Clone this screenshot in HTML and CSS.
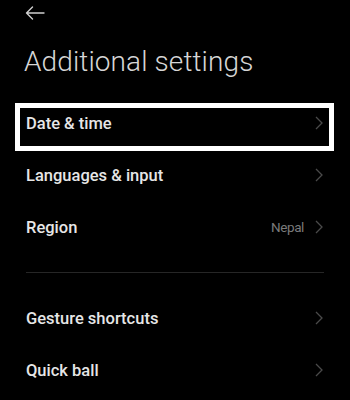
FILE: index.html
```html
<!DOCTYPE html>
<html>
<head>
<meta charset="utf-8">
<link rel="stylesheet" href="styles.css">
</head>
<body>
<div class="screen">
  <div class="topbar">
    <svg class="back" width="20" height="14" viewBox="0 0 20 14">
      <path d="M19 7H1.5M7.5 1L1.5 7L7.5 13" fill="none" stroke="#d0d0d0" stroke-width="1.4" stroke-linecap="round" stroke-linejoin="round"/>
    </svg>
  </div>
  <h1 class="title">Additional settings</h1>
  <div class="list">
    <div class="row highlighted">
      <span class="label">Date &amp; time</span>
      <span class="right"><svg class="chev" width="8" height="14" viewBox="0 0 8 14"><path d="M1 1L7 7L1 13" fill="none" stroke="#4a4a4a" stroke-width="1.3"/></svg></span>
    </div>
    <div class="row">
      <span class="label">Languages &amp; input</span>
      <span class="right"><svg class="chev" width="8" height="14" viewBox="0 0 8 14"><path d="M1 1L7 7L1 13" fill="none" stroke="#4a4a4a" stroke-width="1.3"/></svg></span>
    </div>
    <div class="row">
      <span class="label">Region</span>
      <span class="right"><span class="value">Nepal</span><svg class="chev" width="8" height="14" viewBox="0 0 8 14"><path d="M1 1L7 7L1 13" fill="none" stroke="#4a4a4a" stroke-width="1.3"/></svg></span>
    </div>
  </div>
  <div class="divider"></div>
  <div class="list">
    <div class="row">
      <span class="label">Gesture shortcuts</span>
      <span class="right"><svg class="chev" width="8" height="14" viewBox="0 0 8 14"><path d="M1 1L7 7L1 13" fill="none" stroke="#4a4a4a" stroke-width="1.3"/></svg></span>
    </div>
    <div class="row">
      <span class="label">Quick ball</span>
      <span class="right"><svg class="chev" width="8" height="14" viewBox="0 0 8 14"><path d="M1 1L7 7L1 13" fill="none" stroke="#4a4a4a" stroke-width="1.3"/></svg></span>
    </div>
  </div>
</div>
</body>
</html>
```
FILE: styles.css
```css
html, body {
  margin: 0;
  padding: 0;
  background: #000;
}
.screen {
  width: 350px;
  height: 400px;
  overflow: hidden;
  background: #000;
  font-family: Roboto, "Noto Sans", sans-serif;
}
.topbar {
  height: 26px;
  padding-left: 25px;
  padding-top: 6px;
  box-sizing: border-box;
}
.back {
  display: block;
}
.title {
  margin: 0;
  padding-left: 24px;
  padding-top: 11px;
  font-size: 28px;
  font-weight: 300;
  color: #d6d6d6;
  line-height: 50px;
  height: 60px;
  letter-spacing: 0.1px;
}
.list {
  display: flex;
  flex-direction: column;
}
.row {
  height: 52px;
  display: flex;
  align-items: center;
  justify-content: space-between;
  padding: 0 27px 0 26px;
  position: relative;
}
.label {
  font-size: 16.5px;
  font-weight: 500;
  color: #e6e6e6;
}
.right {
  display: flex;
  align-items: center;
  gap: 11px;
}
.value {
  font-size: 13.5px;
  letter-spacing: -0.4px;
  color: #7a7a7a;
}
.chev {
  display: block;
}
.highlighted::after {
  content: "";
  position: absolute;
  left: 15px;
  top: 6px;
  width: 309px;
  height: 38px;
  border: 5px solid #fff;
}
.divider {
  height: 1px;
  background: #262626;
  margin: 19px 26px 19px 26px;
}
```
